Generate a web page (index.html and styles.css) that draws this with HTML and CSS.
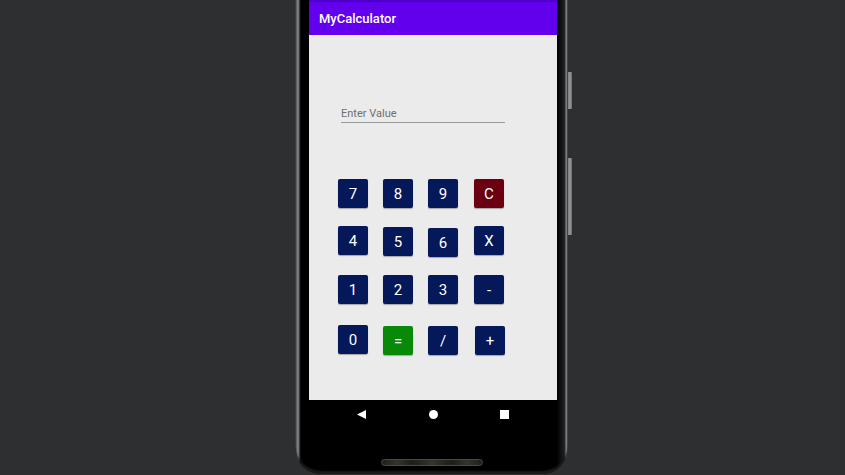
FILE: index.html
```html
<!DOCTYPE html>
<html>
<head>
<meta charset="utf-8">
<link rel="stylesheet" href="styles.css">
</head>
<body>
<div class="phone">
  <div class="side-btn side-btn-1"></div>
  <div class="side-btn side-btn-2"></div>
  <div class="screen">
    <div class="status"></div>
    <div class="appbar">MyCalculator</div>
    <div class="content">
      <div class="field">Enter Value</div>
      <div class="pad">
        <div class="row r1">
          <div class="key">7</div>
          <div class="key">8</div>
          <div class="key">9</div>
          <div class="key red last">C</div>
        </div>
        <div class="row r2">
          <div class="key">4</div>
          <div class="key dn1">5</div>
          <div class="key dn2">6</div>
          <div class="key last">X</div>
        </div>
        <div class="row r3">
          <div class="key">1</div>
          <div class="key">2</div>
          <div class="key">3</div>
          <div class="key last">-</div>
        </div>
        <div class="row r4">
          <div class="key">0</div>
          <div class="key green dn1">=</div>
          <div class="key dn1">/</div>
          <div class="key dn1 last rt1">+</div>
        </div>
      </div>
    </div>
    <div class="navbar">
      <svg class="nav-back" width="9" height="9" viewBox="0 0 9 9"><path d="M0 4.5 L9 0 L9 9 Z" fill="#fff"/></svg>
      <span class="nav-home"></span>
      <span class="nav-recent"></span>
    </div>
  </div>
  <div class="chin"><div class="speaker"></div></div>
</div>
</body>
</html>
```
FILE: styles.css
```css
html, body {
  margin: 0;
  padding: 0;
}
body {
  background: #2e2f31;
  width: 845px;
  height: 475px;
  overflow: hidden;
  font-family: Roboto, "Noto Sans", sans-serif;
}
.phone {
  position: relative;
  margin-left: 295px;
  width: 273px;
  height: 474px;
  box-sizing: border-box;
  padding-left: 14px;
  padding-right: 11px;
  background: linear-gradient(to right,
    #3a3b3d 0, #55575a 1px, #8a8c8e 3px, #5a5c5e 4px, #1a1a1a 5px, #000 6px,
    #000 262px, #1e1f20 269px, #2a2b2c 270px, #8a8b8c 271px, #7a7b7c 272px, #2a2b2c 273px);
  border-radius: 0 0 26px 26px;
  box-shadow: inset 0 -3px 2px #1c1c1c;
}
.side-btn {
  position: absolute;
  left: 273px;
  width: 4px;
  background: linear-gradient(to right, #7c7d7e, #9a9b9c 50%, #6a6b6c);
  border-radius: 0 1px 1px 0;
}
.side-btn-1 { top: 72px; height: 37px; }
.side-btn-2 { top: 158px; height: 77px; }
.screen {
  width: 248px;
  display: flex;
  flex-direction: column;
}
.status {
  height: 2px;
  background: #4a00c8;
}
.appbar {
  height: 33px;
  background: #6200ee;
  color: #fff;
  font-size: 13px;
  font-weight: 500;
  padding-left: 10px;
  box-sizing: border-box;
  display: flex;
  align-items: center;
  box-shadow: 0 1px 2px rgba(0,0,0,0.15);
}
.content {
  height: 365px;
  background: #ebebeb;
  box-sizing: border-box;
  padding-top: 72px;
}
.field {
  margin-left: 32px;
  width: 164px;
  font-size: 11px;
  color: #6f6f6f;
  line-height: 14px;
  padding-bottom: 1px;
  border-bottom: 1px solid #9a9a9a;
}
.pad {
  margin-left: 29px;
  display: flex;
  flex-direction: column;
}
.row {
  display: flex;
  align-items: flex-start;
  gap: 15px;
  height: 31px;
}
.r1 { margin-top: 56px; }
.r2 { margin-top: 16px; }
.r3 { margin-top: 18px; }
.r4 { margin-top: 19px; }
.key {
  width: 30px;
  height: 29px;
  background: #04185a;
  color: #fff;
  font-size: 15px;
  font-weight: 400;
  display: flex;
  align-items: center;
  justify-content: center;
  border-radius: 2px;
  box-shadow: 0 1px 1px rgba(0,0,0,0.3);
}
.key.red { background: #6a0010; }
.key.green { background: #088a08; }
.key.last { margin-left: 1px; }
.dn1 { margin-top: 1px; }
.dn2 { margin-top: 2px; }
.key.rt1 { margin-left: 2px; }
.navbar {
  height: 30px;
  background: #000;
  position: relative;
}
.nav-back {
  position: absolute;
  left: 48px;
  top: 10px;
}
.nav-home {
  position: absolute;
  left: 120px;
  top: 10px;
  width: 9px;
  height: 9px;
  border-radius: 50%;
  background: #fff;
}
.nav-recent {
  position: absolute;
  left: 191px;
  top: 10px;
  width: 9px;
  height: 9px;
  background: #fff;
}
.chin {
  display: flex;
  justify-content: center;
  padding-top: 29px;
  margin-left: -14px;
  margin-right: -11px;
}
.speaker {
  width: 100px;
  height: 5px;
  border-radius: 4px;
  border: 1px solid #4a4a48;
  background: linear-gradient(to right, #1e1e1a, #34342c 15%, #1e1e1a 30%, #34342c 50%, #1e1e1a 70%, #34342c 85%, #1e1e1a);
}
```
